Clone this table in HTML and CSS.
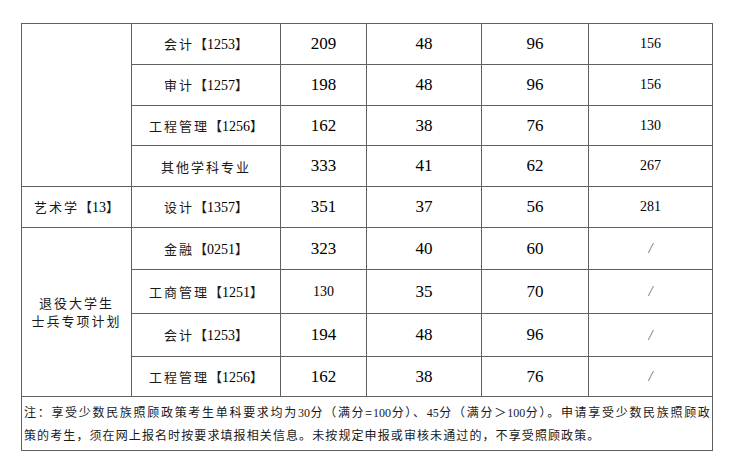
FILE: index.html
```html
<!DOCTYPE html>
<html lang="zh-CN">
<head>
<meta charset="utf-8">
<title>分数线</title>
<link rel="stylesheet" href="styles.css">
</head>
<body>
<div class="page">
<table class="score">
<colgroup>
<col class="c1"><col class="c2"><col class="c3"><col class="c4"><col class="c5"><col class="c6">
</colgroup>
<tbody>
<tr class="h41">
<td rowspan="4"></td>
<td class="label">会计<span class="bk">【<span class="d">1253</span>】</span></td>
<td class="num">209</td><td class="num">48</td><td class="num">96</td><td class="num sm">156</td>
</tr>
<tr class="h41">
<td class="label">审计<span class="bk">【<span class="d">1257</span>】</span></td>
<td class="num">198</td><td class="num">48</td><td class="num">96</td><td class="num sm">156</td>
</tr>
<tr class="h40">
<td class="label">工程管理<span class="bk">【<span class="d">1256</span>】</span></td>
<td class="num">162</td><td class="num">38</td><td class="num">76</td><td class="num sm">130</td>
</tr>
<tr class="h41">
<td class="label">其他学科专业</td>
<td class="num">333</td><td class="num">41</td><td class="num">62</td><td class="num sm">267</td>
</tr>
<tr class="h41">
<td class="label">艺术学<span class="bk">【<span class="d">13</span>】</span></td>
<td class="label">设计<span class="bk">【<span class="d">1357</span>】</span></td>
<td class="num">351</td><td class="num">37</td><td class="num">56</td><td class="num sm">281</td>
</tr>
<tr class="h42">
<td rowspan="4" class="label two"><div class="ln">退役大学生</div><div class="ln">士兵专项计划</div></td>
<td class="label">金融<span class="bk">【<span class="d">0251</span>】</span></td>
<td class="num">323</td><td class="num">40</td><td class="num">60</td><td class="num slash">/</td>
</tr>
<tr class="h44">
<td class="label">工商管理<span class="bk">【<span class="d">1251</span>】</span></td>
<td class="num sm">130</td><td class="num">35</td><td class="num">70</td><td class="num slash">/</td>
</tr>
<tr class="h43">
<td class="label">会计<span class="bk">【<span class="d">1253</span>】</span></td>
<td class="num">194</td><td class="num">48</td><td class="num">96</td><td class="num slash">/</td>
</tr>
<tr class="h40">
<td class="label">工程管理<span class="bk">【<span class="d">1256</span>】</span></td>
<td class="num">162</td><td class="num">38</td><td class="num">76</td><td class="num slash">/</td>
</tr>
<tr class="h52">
<td colspan="6" class="note">
<div class="line first">注：享受少数民族照顾政策考生单科要求均为<span class="nd">30</span>分（满分=<span class="nd">100</span>分）、<span class="nd">45</span>分（满分＞<span class="nd">100</span>分）。申请享受少数民族照顾政</div>
<div class="line">策的考生，须在网上报名时按要求填报相关信息。未按规定申报或审核未通过的，不享受照顾政策。</div>
</td>
</tr>
</tbody>
</table>
</div>
</body>
</html>
```

FILE: styles.css
```css
html, body {
  margin: 0;
  padding: 0;
  background: #ffffff;
}

.page {
  padding: 23px 0 0 21px;
}

.score {
  border-collapse: collapse;
  table-layout: fixed;
  width: 691px;
  color: #000;
  font-family: "Liberation Serif", "Noto Sans CJK SC", serif;
}

.score td {
  border: 1px solid #606060;
  padding: 0;
  text-align: center;
  vertical-align: middle;
}

.c1 { width: 110px; }
.c2 { width: 149px; }
.c3 { width: 86px; }
.c4 { width: 115px; }
.c5 { width: 107px; }
.c6 { width: 124px; }

.h40 { height: 40px; }
.h41 { height: 41px; }
.h42 { height: 42px; }
.h43 { height: 43px; }
.h44 { height: 44px; }
.h52 { height: 52px; }

.score td.label {
  font-family: "Noto Sans CJK SC", sans-serif;
  font-size: 13px;
  letter-spacing: 2px;
  line-height: 17px;
  color: #1a1a1a;
}

.score td.two {
  line-height: 18px;
}

.label .ln {
  display: block;
}

.label .bk {
  letter-spacing: 0;
}

.label .d {
  font-family: "Liberation Serif", serif;
  font-size: 14px;
  color: #000;
}

.num {
  font-size: 17px;
}

.num.sm {
  font-size: 14px;
}

.score td.slash {
  font-size: 15px;
  color: #666;
  font-style: italic;
}

.score td.note {
  text-align: left;
  padding: 4px 1px 4px 2px;
  font-family: "Noto Sans CJK SC", sans-serif;
  font-size: 12px;
  letter-spacing: 1.1px;
  line-height: 22px;
  color: #1a1a1a;
}

.note .line {
  white-space: nowrap;
}

.note .first {
  text-align: justify;
  text-align-last: justify;
  white-space: normal;
}

.note .nd {
  font-family: "Liberation Serif", serif;
  font-size: 12px;
  letter-spacing: 0;
}
```
